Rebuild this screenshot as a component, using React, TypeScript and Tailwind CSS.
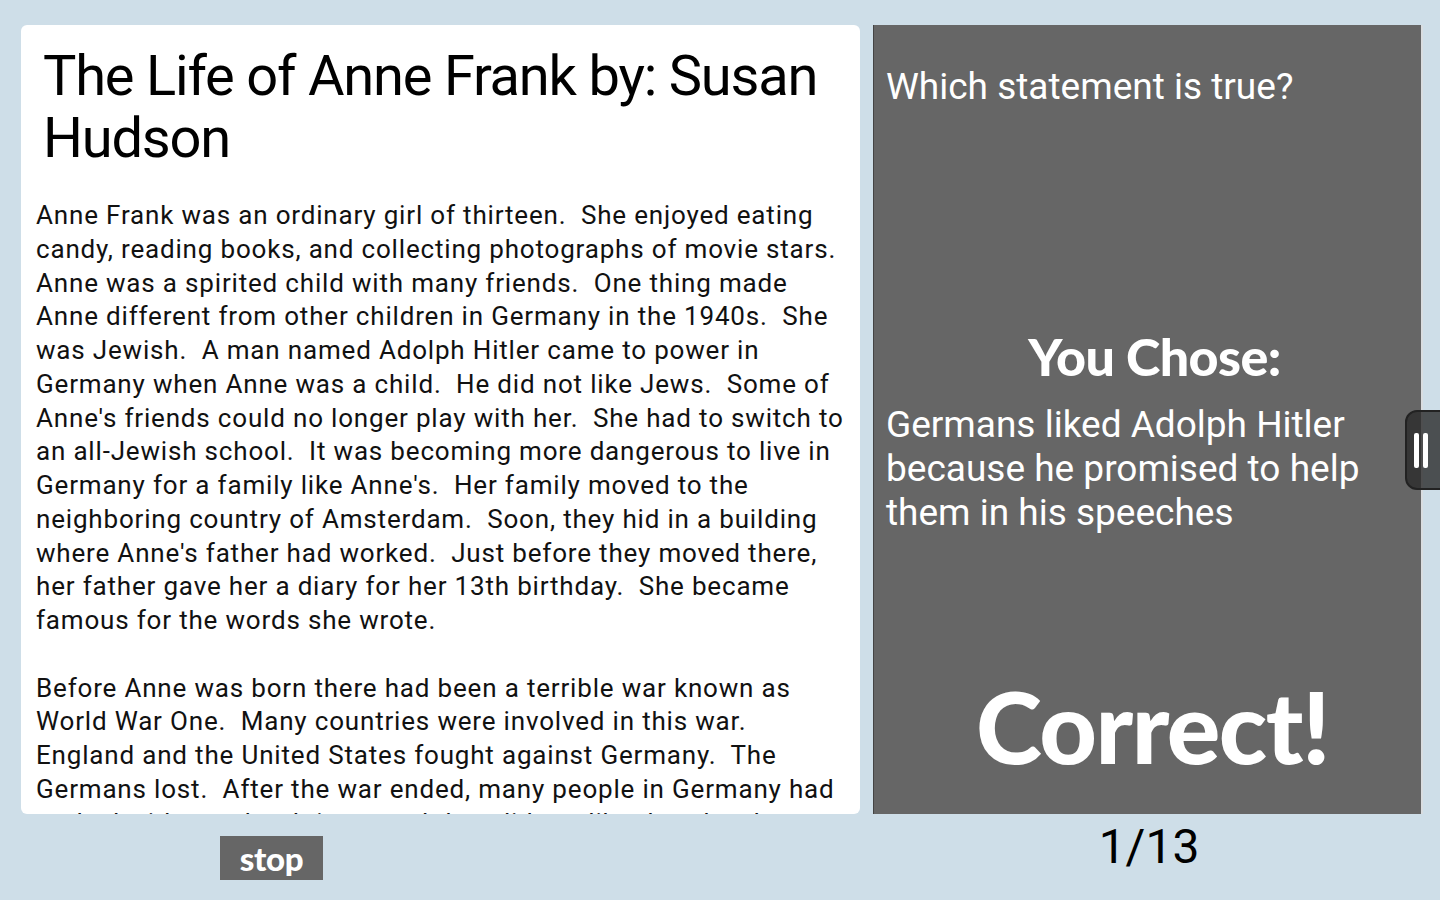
import React from "react";

const passage = [
  "Anne Frank was an ordinary girl of thirteen.  She enjoyed eating",
  "candy, reading books, and collecting photographs of movie stars.",
  "Anne was a spirited child with many friends.  One thing made",
  "Anne different from other children in Germany in the 1940s.  She",
  "was Jewish.  A man named Adolph Hitler came to power in",
  "Germany when Anne was a child.  He did not like Jews.  Some of",
  "Anne's friends could no longer play with her.  She had to switch to",
  "an all-Jewish school.  It was becoming more dangerous to live in",
  "Germany for a family like Anne's.  Her family moved to the",
  "neighboring country of Amsterdam.  Soon, they hid in a building",
  "where Anne's father had worked.  Just before they moved there,",
  "her father gave her a diary for her 13th birthday.  She became",
  "famous for the words she wrote.",
  "",
  "Before Anne was born there had been a terrible war known as",
  "World War One.  Many countries were involved in this war.",
  "England and the United States fought against Germany.  The",
  "Germans lost.  After the war ended, many people in Germany had",
  "to deal with very hard times and they did not like that they lost.",
];

export default function App() {
  return (
    <div className="relative w-[1440px] h-[900px] overflow-hidden bg-[#cedee8] font-['Roboto',sans-serif]">
      <div className="flex gap-[13px] pl-[21px] pt-[25px]">
        {/* Reading passage */}
        <div className="w-[839px] h-[789px] bg-white rounded-[6px] overflow-hidden">
          <h1 className="pl-[22px] pt-[20px] text-[56px] leading-[62px] tracking-[-1.2px] text-black whitespace-nowrap">
            The Life of Anne Frank by: Susan
            <br />
            Hudson
          </h1>
          <div className="pl-[15px] mt-[30px] text-[26px] leading-[33.75px] tracking-[0.82px] text-[#111]">
            {passage.map((line, i) => (
              <div key={i} className="whitespace-pre h-[33.75px]">
                {line}
              </div>
            ))}
          </div>
        </div>

        {/* Question panel */}
        <div className="w-[550px] h-[789px] bg-[#666666] border-l border-[#444] border-r-2 border-r-[#d9dde0] flex flex-col text-white">
          <p className="pl-[12px] pt-[42px] text-[37px] leading-[40px]">Which statement is true?</p>
          <p className="mt-[223px] pl-[14px] text-center text-[52px] leading-[52px] font-black font-['Lato',sans-serif] tracking-[-0.6px]">
            You Chose:
          </p>
          <p className="pl-[12px] pr-[20px] mt-[21px] text-[37px] leading-[44px]">
            Germans liked Adolph Hitler because he promised to help them in his speeches
          </p>
          <p className="mt-[140px] pl-[10px] text-center text-[100px] leading-[100px] font-black font-['Lato',sans-serif] tracking-[-1.5px]">
            Correct!
          </p>
        </div>
      </div>

      <div className="flex pt-[22px]">
        <div className="w-[880px] pl-[220px]">
          <button className="w-[103px] h-[44px] bg-[#666666] text-white text-[33px] leading-[40px] font-black font-['Lato',sans-serif] tracking-[-0.3px]">
            stop
          </button>
        </div>
        <div className="w-[538px] text-center text-[48px] leading-[48px] text-black -mt-[13px]">1/13</div>
      </div>

      {/* Drawer handle */}
      <div className="absolute left-[1405px] top-[410px] w-[50px] h-[80px] rounded-l-[12px] bg-[#2a2a2a]/80 border-2 border-[#222] flex items-center pl-[7px] gap-[4px]">
        <div className="w-[5px] h-[35px] bg-white rounded-[2px]" />
        <div className="w-[5px] h-[35px] bg-white rounded-[2px]" />
      </div>
    </div>
  );
}
